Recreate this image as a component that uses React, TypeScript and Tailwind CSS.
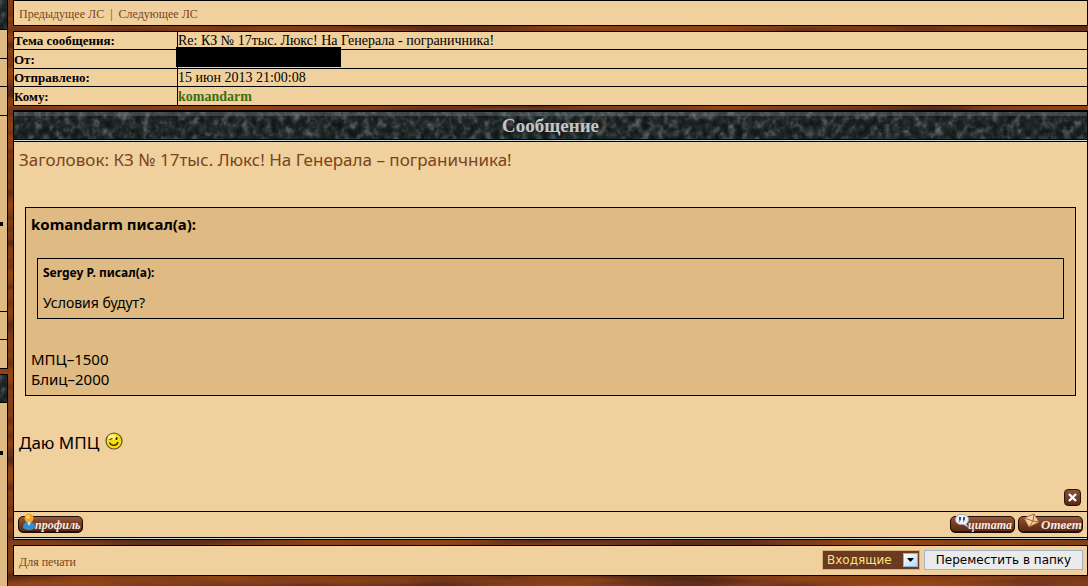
import type { ReactNode } from 'react';

const DETAILS_LABEL = 'w-[164px] border border-black p-0 text-left text-[13px] font-bold';
const DETAILS_VALUE = 'relative border border-black p-0 text-[14px]';

export default function App() {
    return (
        <div className="relative isolate flex min-h-screen gap-[5px] overflow-hidden bg-[#7a3917] font-['Liberation_Serif',serif] text-black">
            <TextureFilters />
            <Texture filter="wood" />

            <SideColumn />

            <main className="flex min-w-0 flex-1 flex-col">
                <nav className="flex gap-1.5 border border-black bg-[#f0d09d] px-[5px] pt-[5px] pb-[3px] text-[12px] leading-4 text-[#7a4420]">
                    <a href="#prev">Предыдущее ЛС</a>
                    <span>|</span>
                    <a href="#next">Следующее ЛС</a>
                </nav>

                <MessageDetails />

                <section className="mt-1 border border-black bg-[#f0d09d]">
                    <div className="relative isolate flex h-7 items-center justify-center border-t border-black bg-[#141c1c]">
                        <Texture filter="slate" />
                        <div className="absolute inset-x-0 top-0 -z-10 h-1 bg-[#8c949c]/30" />
                        <h1 className="text-[19px] leading-5 font-bold text-[#c3c5c8]">Сообщение</h1>
                    </div>
                    <div className="h-[3px] border-y border-black bg-[#c8dcdc]" />
                    <MessageBody />
                    <MessageActions />
                    <div className="h-0.5 border-t border-black bg-[#c8dcdc]" />
                </section>

                <FolderBar />
            </main>
        </div>
    );
}

function SideColumn() {
    return (
        <aside className="flex w-2 shrink-0 flex-col">
            <div className="relative isolate h-[29px] border-r border-black bg-[#141c1c]">
                <Texture filter="slate" />
            </div>
            <div className="border-t border-r border-black bg-[#dfba82]">
                <div className="h-7" />
                <div className="h-7 border-t border-black" />
                <div className="h-[29px] border-t border-black" />
                <div className="flex h-[196px] items-center border-t border-black pt-5">
                    <span className="h-1 w-[3px] bg-black" />
                </div>
                <div className="h-7 border-t border-black" />
                <div className="h-[30px] border-y border-black" />
            </div>
            <div className="relative isolate mt-[5px] h-[29px] border-y border-r border-black bg-[#141c1c]">
                <Texture filter="slate" />
            </div>
            <div className="flex-1 border-r border-black bg-[#dfba82] pt-12">
                <span className="block h-1 w-[3px] bg-black" />
            </div>
        </aside>
    );
}

function MessageDetails() {
    return (
        <table className="mt-[5px] w-full border-collapse bg-[#f0d09d] leading-[17px]">
            <tbody>
                <tr className="h-[18px]">
                    <th scope="row" className={DETAILS_LABEL}>Тема сообщения:</th>
                    <td className={DETAILS_VALUE}>Re: КЗ № 17тыс. Люкс! На Генерала - пограничника!</td>
                </tr>
                <tr className="h-[19px]">
                    <th scope="row" className={DETAILS_LABEL}>От:</th>
                    <td className={DETAILS_VALUE}>
                        {/* Sender is hidden */}
                        <span className="absolute -top-[3px] -left-0.5 h-5 w-[165px] bg-black" />
                    </td>
                </tr>
                <tr className="h-[18px]">
                    <th scope="row" className={DETAILS_LABEL}>Отправлено:</th>
                    <td className={DETAILS_VALUE}>15 июн 2013 21:00:08</td>
                </tr>
                <tr className="h-[19px]">
                    <th scope="row" className={DETAILS_LABEL}>Кому:</th>
                    <td className={DETAILS_VALUE}>
                        <a href="#komandarm" className="font-bold text-[#3c6e14]">komandarm</a>
                    </td>
                </tr>
            </tbody>
        </table>
    );
}

function MessageBody() {
    return (
        <article className="px-[5px] pt-1 font-['Noto_Sans',sans-serif]">
            <h2 className="text-[17px] leading-7 text-[#7a4420]">
                Заголовок: КЗ № 17тыс. Люкс! На Генерала – пограничника!
            </h2>

            <blockquote className="mx-1.5 mt-[33px] border border-black bg-[#dfba82] px-[5px] pt-[3px] pb-1.5">
                <p className="text-[15px] leading-[26px] font-bold">komandarm писал(а):</p>
                <blockquote className="mx-1.5 mt-[21px] border border-black px-[5px] pt-1 pb-[5px]">
                    <p className="text-[12px] leading-5 font-bold">Sergey P. писал(а):</p>
                    <p className="mt-2.5 text-[14px] leading-5">Условия будут?</p>
                </blockquote>
                <p className="mt-[30px] text-[15px] leading-5">
                    МПЦ–1500
                    <br />
                    Блиц–2000
                </p>
            </blockquote>

            <p className="mt-[33px] flex items-center gap-1.5 text-[17px] leading-7">
                Даю МПЦ <WinkSmiley />
            </p>

            <div className="mt-8 flex justify-end pr-px pb-[5px]">
                <button
                    type="button"
                    aria-label="Удалить"
                    className="flex h-[17px] w-[17px] items-center justify-center rounded border border-[#2a120a] bg-gradient-to-b from-[#8a5238] to-[#5a2814]"
                >
                    <svg width="9" height="9" viewBox="0 0 9 9" stroke="#fff" strokeWidth="2.4">
                        <path d="M1 1l7 7M8 1l-7 7" />
                    </svg>
                </button>
            </div>
        </article>
    );
}

function MessageActions() {
    return (
        <div className="flex items-end justify-between border-t border-black px-1 pt-1 pb-1">
            <PlankButton
                icon={
                    <svg width="14" height="18" viewBox="0 0 14 18" className="absolute -top-1 left-[3px]">
                        <path d="M1 14c0-4 3-5 6-5s6 1 6 5c0 2-3 3-6 3s-6-1-6-3z" fill="#2f8fd0" />
                        <path d="M5 9l2 4 2-4z" fill="#d8ecf8" />
                        <circle cx="7" cy="5" r="4.5" fill="#f5a623" />
                        <circle cx="6" cy="4" r="2" fill="#ffd56b" />
                    </svg>
                }
            >
                <span className="pl-4 text-[12px]">профиль</span>
            </PlankButton>
            <div className="flex gap-[3px]">
                <PlankButton
                    icon={
                        <svg width="15" height="14" viewBox="0 0 15 14" className="absolute -top-[3px] left-1">
                            <path d="M7 .5c4 0 6.500 2 6.500 5 0 2-1 3.500-2.500 4.300l2 3.200-4.500-2.500C3.500 11 .5 9 .5 5.500c0-3 2.500-5 6.500-5z" fill="#eef0f4" stroke="#a8a8b0" />
                            <path d="M4 3h2v2.500L4.500 8H4l.5-2H4zM8 3h2v2.500L8.500 8H8l.5-2H8z" fill="#3a4a86" />
                        </svg>
                    }
                >
                    <span className="pl-[17px] text-[12px]">цитата</span>
                </PlankButton>
                <PlankButton
                    icon={
                        <svg width="20" height="16" viewBox="0 0 18 16" className="absolute -top-1 left-[3px]">
                            <path d="M1 5L11 1l5 8-10 5z" fill="#f3d3a6" stroke="#a8703e" />
                            <path d="M1 5l9 3 1-7M6 14l4-6 6 1" fill="none" stroke="#b0602e" />
                        </svg>
                    }
                >
                    <span className="pl-[22px] text-[13px]">Ответ</span>
                </PlankButton>
            </div>
        </div>
    );
}

function PlankButton({ icon, children }: { icon: ReactNode; children: ReactNode }) {
    return (
        <button
            type="button"
            className="relative h-[17px] w-[65px] rounded-[5px] border border-[#1c0c06] bg-gradient-to-b from-[#95583a] via-[#74391f] to-[#5a2812] text-[#f4ece6] shadow-[inset_0_-1px_0_#2a120a]"
        >
            <span className="flex h-full items-center leading-4 font-bold whitespace-nowrap italic">{children}</span>
            {icon}
        </button>
    );
}

function FolderBar() {
    return (
        <footer className="mt-[5px] mb-2.5 flex items-center justify-between border border-black bg-[#f0d09d] px-1 pt-1 pb-[5px]">
            <a href="#print" className="pt-1 pl-px text-[12px] leading-4 text-[#7a4420]">Для печати</a>
            <form className="flex h-5 gap-1 font-['DejaVu_Sans',sans-serif]" onSubmit={e => e.preventDefault()}>
                <div className="relative flex">
                    <select
                        aria-label="Папка"
                        className="h-5 w-[98px] appearance-none border border-[#d8ac6c] bg-[#6b3a23] pl-1 text-[12px] leading-4 text-[#ffe27c]"
                    >
                        <option>Входящие</option>
                    </select>
                    <span className="pointer-events-none absolute top-[3px] right-0.5 flex h-[14px] w-[15px] items-center justify-center border border-[#8fb4dc] bg-gradient-to-br from-white to-[#b8d8f4]">
                        <svg width="7" height="4" viewBox="0 0 7 4">
                            <path d="M0 0h7L3.500 4z" />
                        </svg>
                    </span>
                </div>
                <button type="submit" className="h-5 w-[159px] border border-[#a4b4c6] bg-[#ebebeb] text-center text-[12px] leading-4 whitespace-nowrap">
                    Переместить в папку
                </button>
            </form>
        </footer>
    );
}

function WinkSmiley() {
    return (
        <svg width="18" height="18" viewBox="0 0 18 18" className="-mt-1" role="img" aria-label="Подмигивает">
            <circle cx="9" cy="9" r="8" fill="#f8dc10" stroke="#5c5230" strokeWidth="1.2" />
            <ellipse cx="7" cy="5" rx="4" ry="2.500" fill="#fff68a" />
            <path d="M4.500 7.500l3-1" stroke="#3a2c00" strokeWidth="1.3" />
            <ellipse cx="11.500" cy="6.500" rx="1" ry="1.500" fill="#2a2000" />
            <path d="M4.500 10.500c2 4 7 4 8.500-.5" fill="none" stroke="#2a2000" strokeWidth="1.3" />
        </svg>
    );
}

function Texture({ filter }: { filter: 'wood' | 'slate' }) {
    return (
        <svg className="absolute inset-0 -z-10 h-full w-full" aria-hidden="true">
            <rect width="100%" height="100%" filter={`url(#${filter})`} />
        </svg>
    );
}

function TextureFilters() {
    return (
        <svg className="absolute h-0 w-0" aria-hidden="true">
            <filter id="wood" x="0" y="0" width="100%" height="100%" colorInterpolationFilters="sRGB">
                <feTurbulence type="fractalNoise" baseFrequency="0.005 0.06" numOctaves="3" seed="8" />
                <feColorMatrix values="1 0 0 0 0  1 0 0 0 0  1 0 0 0 0  0 0 0 0 1" />
                <feComponentTransfer>
                    <feFuncR type="table" tableValues="0.28 0.32 0.4 0.5 0.57 0.6 0.6" />
                    <feFuncG type="table" tableValues="0.15 0.16 0.19 0.24 0.27 0.28 0.28" />
                    <feFuncB type="table" tableValues="0.1 0.1 0.1 0.1 0.08 0.08 0.08" />
                </feComponentTransfer>
            </filter>
            <filter id="slate" x="0" y="0" width="100%" height="100%" colorInterpolationFilters="sRGB">
                <feTurbulence type="fractalNoise" baseFrequency="0.14 0.12" numOctaves="4" seed="4" />
                <feColorMatrix values="0.6 0.4 0 0 0  0.6 0.4 0 0 0  0.6 0.4 0 0 0  0 0 0 0 1" />
                <feComponentTransfer>
                    <feFuncR type="table" tableValues="0.05 0.06 0.07 0.13 0.28 0.4 0.42" />
                    <feFuncG type="table" tableValues="0.08 0.09 0.1 0.16 0.3 0.42 0.44" />
                    <feFuncB type="table" tableValues="0.08 0.09 0.1 0.16 0.31 0.44 0.46" />
                </feComponentTransfer>
            </filter>
        </svg>
    );
}
